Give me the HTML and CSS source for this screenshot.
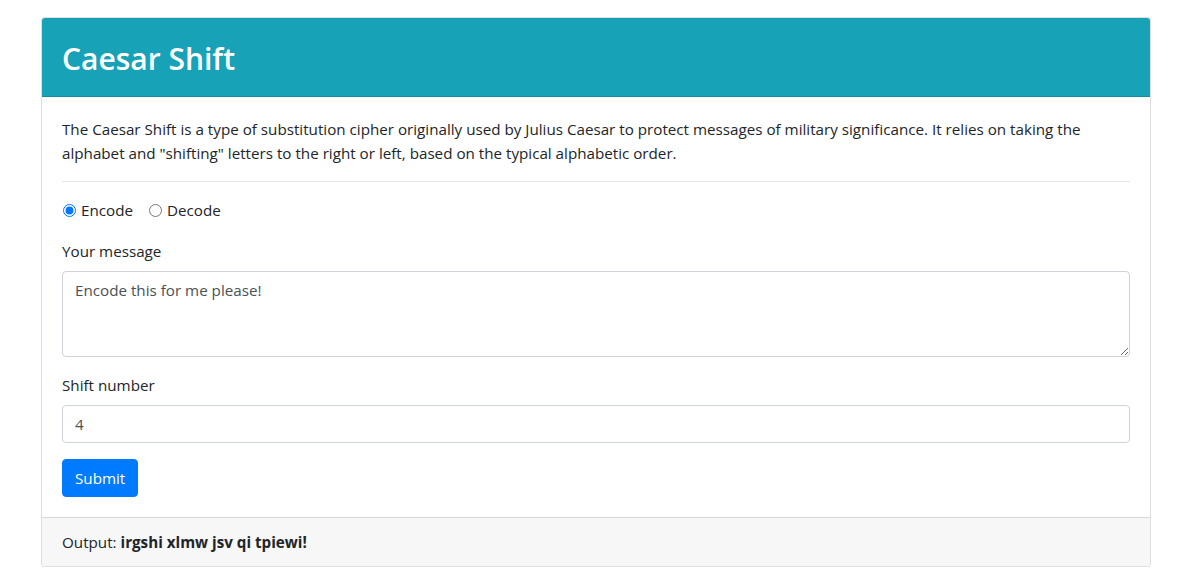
FILE: index.html
```html
<!DOCTYPE html>
<html lang="en">
<head>
<meta charset="utf-8">
<title>Caesar Shift</title>
<link rel="stylesheet" href="styles.css">
</head>
<body>
<div class="container">
  <div class="card">
    <div class="card-header">
      <h2 class="title">Caesar Shift</h2>
    </div>
    <div class="card-body">
      <p class="intro">The Caesar Shift is a type of substitution cipher originally used by Julius Caesar to protect messages of military significance. It relies on taking the alphabet and "shifting" letters to the right or left, based on the typical alphabetic order.</p>
      <hr class="divider">
      <form class="form">
        <div class="form-group radios">
          <label class="radio"><input type="radio" name="mode" checked> Encode</label>
          <label class="radio"><input type="radio" name="mode"> Decode</label>
        </div>
        <div class="form-group">
          <label class="label" for="msg">Your message</label>
          <textarea id="msg" class="control textarea" rows="3">Encode this for me please!</textarea>
        </div>
        <div class="form-group">
          <label class="label" for="shift">Shift number</label>
          <input id="shift" class="control" type="text" value="4">
        </div>
        <button type="button" class="btn">Submit</button>
      </form>
    </div>
    <div class="card-footer">Output: <strong>irgshi xlmw jsv qi tpiewi!</strong></div>
  </div>
</div>
</body>
</html>
```

FILE: styles.css
```css
* { box-sizing: border-box; }
html, body { margin: 0; padding: 0; background: #fff; }
body {
  font-family: "Open Sans", "Noto Sans", "Liberation Sans", sans-serif;
  font-size: 15.2px;
  line-height: 24px;
  color: #212529;
}
.container {
  padding: 17px 33px 8px 41px;
}
.card {
  border: 1px solid rgba(0,0,0,.125);
  border-radius: 4px;
  overflow: hidden;
  background: #fff;
}
.card-header {
  background: #17a2b8;
  padding: 22px 20px 18px 20px;
  border-bottom: 1px solid rgba(0,0,0,.125);
}
.title {
  margin: 0;
  color: #fff;
  font-size: 30px;
  line-height: 38px;
  font-weight: 600;
}
.card-body { padding: 20px; }
.intro { margin: 0 0 16px; }
.divider {
  margin: 0 0 16px;
  border: 0;
  border-top: 1px solid rgba(0,0,0,.1);
}
.form { margin: 0; }
.form-group { margin-bottom: 16px; }
.radios { display: flex; align-items: center; height: 24px; margin-bottom: 17px; }
.radio {
  display: inline-flex;
  align-items: center;
  margin-right: 15px;
}
.radio input {
  margin: 0 5px 0 1px;
  width: 13px;
  height: 13px;
}
.label { display: block; margin-bottom: 8px; }
.control {
  display: block;
  width: 100%;
  font: inherit;
  color: #495057;
  padding: 6px 12px;
  height: 38px;
  border: 1px solid #ced4da;
  border-radius: 4px;
  background: #fff;
}
.textarea { height: 86px; resize: vertical; }
.btn {
  font: inherit;
  color: #fff;
  background: #007bff;
  border: 1px solid #007bff;
  border-radius: 4px;
  padding: 6px 12px;
  height: 38px;
  cursor: pointer;
}
.card-footer {
  background: #f7f7f7;
  border-top: 1px solid rgba(0,0,0,.125);
  padding: 12px 20px;
}
.card-footer strong { font-weight: 700; }
```
